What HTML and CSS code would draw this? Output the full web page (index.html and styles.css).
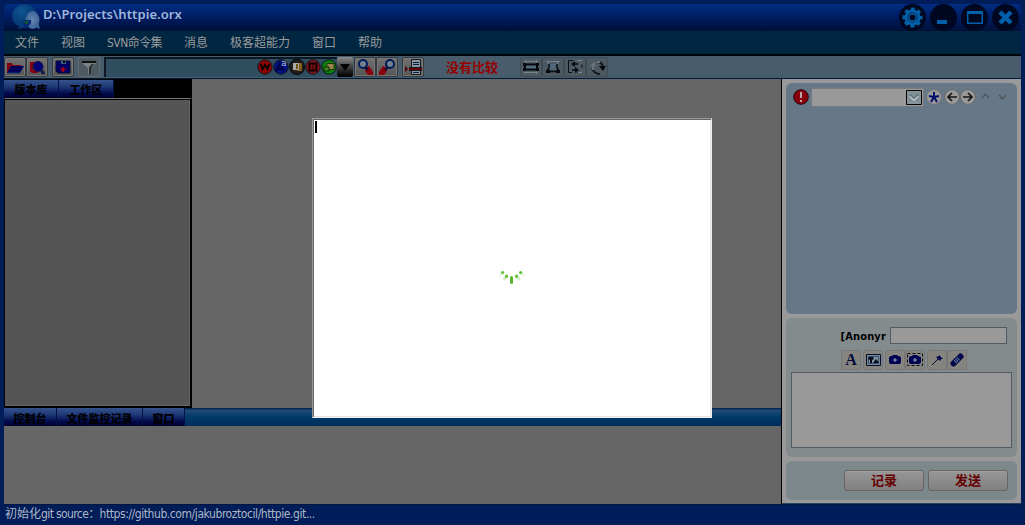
FILE: index.html
```html
<!DOCTYPE html>
<html lang="zh-CN">
<head>
<meta charset="utf-8">
<title>D:\Projects\httpie.orx</title>
<link rel="stylesheet" href="styles.css">
</head>
<body>
<div class="window">
  <header class="titlebar">
    <svg class="logo" width="30" height="27" viewBox="0 0 30 27"><defs><radialGradient id="lg" cx=".4" cy=".3"><stop offset="0" stop-color="#0d568f"/><stop offset="1" stop-color="#063a78"/></radialGradient><radialGradient id="lg2"><stop offset="0" stop-color="#6585ad"/><stop offset="1" stop-color="#3d6599"/></radialGradient></defs><ellipse cx="13.500" cy="12" rx="12.500" ry="11.800" fill="url(#lg)"/><path d="M9 21l-2 4 7-2z" fill="#063a78"/><ellipse cx="21.500" cy="16" rx="7" ry="9" fill="url(#lg2)"/><path d="M24 23l5 2-2-7z" fill="#3d6599"/><path d="M12 16h8v3l-3 4-4 1z" fill="#08267a"/><path d="M12 17h6l-2 4z" fill="#0e5a30"/></svg>
    <h1 class="title">D:\Projects\httpie.orx</h1>
    <div class="controls">
      <svg width="27" height="27" viewBox="0 0 27 27"><circle cx="13.500" cy="13.500" r="13.500" fill="#000720"/><g stroke="#0060a9" fill="none"><circle cx="13.500" cy="13.500" r="8.500" stroke-width="3" stroke-dasharray="3.800 2.876" stroke-dashoffset="1.900"/><circle cx="13.500" cy="13.500" r="6.500" stroke-width="3"/></g><circle cx="13.500" cy="13.500" r="3.700" fill="none" stroke="#0060a9" stroke-width="1.500"/></svg>
      <svg width="27" height="27" viewBox="0 0 27 27"><circle cx="13.500" cy="13.500" r="13.500" fill="#000720"/><path d="M7 16h10v4H7z" fill="#0060a9"/></svg>
      <svg width="27" height="27" viewBox="0 0 27 27"><circle cx="13.500" cy="13.500" r="13.500" fill="#000720"/><path d="M6 7h16v13H6zM7.500 10v8.500h13V10z" fill="#0060a9" fill-rule="evenodd"/></svg>
      <svg width="27" height="27" viewBox="0 0 27 27"><circle cx="13.500" cy="13.500" r="13.500" fill="#000720"/><path d="M8 8l11 11M19 8L8 19" stroke="#0060a9" stroke-width="4.500"/></svg>
    </div>
  </header>
  <nav class="menu"><span>文件</span><span>视图</span><span>SVN命令集</span><span>消息</span><span>极客超能力</span><span>窗口</span><span>帮助</span></nav>
  <div class="toolbar">
    <button class="tool"><svg width="18" height="18"><path d="M1 13V4h5l1 2h8v2H6z" fill="#7f0010"/><path d="M1 14L5 7h13l-4 7z" fill="#00005c"/><path d="M2 14h12" stroke="#173b70"/></svg></button>
    <button class="tool t2"><svg width="18" height="18"><path d="M2 3h9v3H5v5h5v3H4l-2-2z" fill="#850010"/><circle cx="10" cy="7.500" r="5" fill="#000078" stroke="#111b3b"/><path d="M13 11l3 4" stroke="#111b48" stroke-width="3"/></svg></button>
    <button class="tool t3"><svg width="18" height="18"><path d="M2 2h14v12H4l-2-2z" fill="#000067" stroke="#000c2c"/><path d="M7 2h5v3H7z" fill="#386080"/><path d="M9 2h2v2H9z" fill="#000"/><path d="M9 13V8M6.500 10.500h5" stroke="#9a0017" stroke-width="2"/></svg></button>
    <button class="tool t4 pale filter"><svg width="18" height="18"><path d="M2 2h14v2l-5 5v6H8V9L2 4z" fill="#7c8184"/><path d="M2 2h14v2H2z" fill="#111"/><path d="M12 5h2l-3 4v6H9V8z" fill="#272b2e"/></svg></button>
    <div class="address">
      <svg width="80" height="18" viewBox="0 0 80 18"><g stroke="#10151b"><circle cx="8" cy="9" r="7.200" fill="#8b0505"/><circle cx="24" cy="9" r="7.200" fill="#001386"/><circle cx="40" cy="9" r="7.200" fill="#241e17" stroke-width="2"/><circle cx="56" cy="9" r="7.200" fill="#80151b"/><circle cx="72" cy="9" r="7.200" fill="#07840a"/></g><path d="M3.500 6l2 5L8 7l2.500 4 2-5" fill="none" stroke="#100000" stroke-width="2"/><path d="M19 13l4-8 4 8M21 11h5" fill="none" stroke="#00003d" stroke-width="2"/><path d="M40 5h5v8h-5z" fill="#7d5b17"/><path d="M36 5h6v7h-6z" fill="#a9aaa7"/><path d="M39 6h2v5h-2z" fill="#6b5010"/><path d="M52.500 5.500h7v7h-7z" fill="#7d1116" stroke="#120000" stroke-width="2"/><path d="M56 6v6" stroke="#210000"/><path d="M70 5.500h7v6h-7z" fill="#9d8151" stroke="#28370b"/><path d="M67 9h5v4h-5z" fill="#43871e" stroke="#102a05"/></svg><span class="superscript">a</span>
    </div>
    <button class="drop"><svg width="16" height="18"><path d="M3 6h10l-5 7z" fill="#000"/></svg></button>
    <button class="tool"><svg width="18" height="18"><path d="M9 9l4-2 4 6v3h-5l-3-4z" fill="#8b000e"/><circle cx="7" cy="5" r="4" fill="#71818f" stroke="#001b59" stroke-width="2"/><path d="M9 8l3 3" stroke="#00123d" stroke-width="2"/></svg></button>
    <button class="tool t2"><svg width="18" height="18"><path d="M9 9L5 7 1 13v3h5l3-4z" fill="#8b000e"/><circle cx="12" cy="5" r="4" fill="#71818f" stroke="#001b59" stroke-width="2"/><path d="M10 8l-3 3" stroke="#00123d" stroke-width="2"/></svg></button>
    <button class="tool t3"><svg width="18" height="18"><path d="M7.500.5h9v15h-9z" fill="#8797a5" stroke="#15191d"/><path d="M9 3.500h6M9 5.500h6M9 13.500h6" stroke="#111d30"/><path d="M5 8h13v4H5z" fill="#15191d"/><path d="M5 9h13v2H5z" fill="#650008"/><path d="M1 7l3 3-3 3z" fill="#550005"/></svg></button>
    <strong class="compare">没有比较</strong>
    <div class="compare-tools">
      <button class="tool pale"><svg width="18" height="18"><path d="M3.500 1v14M14.500 1v14" stroke="#687784"/><path d="M2 2.500h14M2 13.500h14" stroke="#78828b"/><path d="M3 5.500h12v5H3z" fill="#526a7b" stroke="#03090f" stroke-width="2"/><path d="M1 5.500h3M14 5.500h3M1 10.500h3M14 10.500h3" stroke="#03090f" stroke-width="3"/></svg></button>
      <button class="tool pale"><svg width="18" height="18"><path d="M2 2.500h14M4.500 2v4M13.500 2v4" stroke="#738592"/><path d="M5 5.500h8M5 7.500h8M5 9.500h8" stroke="#52718b"/><path d="M5 5v4l-2 3M13 5v4l2 3M4 12.500h10" fill="none" stroke="#050a10" stroke-width="1.500"/><path d="M2 11h4v3H2zM12 11h4v3h-4z" fill="#050a10"/></svg></button>
      <button class="tool pale"><svg width="18" height="18"><path d="M7 1.500H2.500v12H6M11 1.500h5v12h-5" fill="none" stroke="#07101a"/><path d="M11 1.500h5v4M12 13.500h4V9" fill="none" stroke="#7a8791"/><path d="M6 5h6M6 11h6" stroke="#050a0e" stroke-width="1.500"/><path d="M9 2v6L5 5zM9 8v6l4-3z" fill="#050a0e"/></svg></button>
      <button class="tool pale"><svg width="18" height="18"><path d="M4 10q3 5 8 5" fill="none" stroke="#10191e" stroke-width="2"/><path d="M10 3q5 1 5 6" fill="none" stroke="#10191e" stroke-width="2"/><path d="M11 7h7l-3 5z" fill="#03070a"/><path d="M2 7h6L6 3z" fill="#6b737b"/><path d="M5 7v4M9 3h3" stroke="#6b737b" stroke-width="2"/></svg></button>
    </div>
  </div>
  <main class="content">
    <section class="workspace">
      <div class="upper">
        <aside class="browser"><div class="tabs top-tabs"><span>版本库</span><span>工作区</span></div><div class="tree"></div></aside>
      </div>
      <div class="tabs bottom-tabs"><span>控制台</span><span>文件监控记录</span><span>窗口</span></div>
      <div class="console"></div>
      <div class="dialog"><i class="caret"></i>
        <svg class="spinner" width="26" height="18" viewBox="0 0 26 18"><g stroke-linecap="round" stroke-width="3"><path d="M12.500 7.500v5" stroke="#55b92b"/><path d="M7.500 6l-2 3M18 6l2 3" stroke="#d5eccb"/><path d="M3 3.500L1.500 5M23 3.500L24 5" stroke="#eaf5e5"/><path d="M7.500 6v.5M17.500 6v.5" stroke="#65c33c"/><path d="M3.500 2.500h.3M21.500 2.500h.3" stroke="#65c33c"/></g></svg>
      </div>
    </section>
    <aside class="chat">
      <section class="card conversation">
        <svg width="16" height="16"><circle cx="8" cy="8" r="7.300" fill="#8a000d" stroke="#210007"/><path d="M8 3v6M8 11v2" stroke="#b7aaad" stroke-width="2"/></svg>
        <div class="select"><svg width="16" height="15"><path d="M.5.5h15v14H.5z" fill="#8b9499" stroke="#050505"/><path d="M2.500 2.500h11v10h-11z" fill="#7c8f98"/><path d="M4 6l4 4 4-4" fill="none" stroke="#b6c0c4" stroke-width="2"/><path d="M4 4.500l4 4 4-4" fill="none" stroke="#38454d"/></svg></div>
        <svg class="star" width="16" height="16"><circle cx="8" cy="8" r="7.400" fill="#999" stroke="#777"/><path d="M8 3v5M8 8L3 7M8 8l5-1M8 8l-3 5M8 8l3 5" stroke="#00106c" stroke-width="2"/></svg>
        <svg class="back" width="16" height="16"><circle cx="8" cy="8" r="7.400" fill="#999" stroke="#666"/><path d="M13 8H4m4-4L4 8l4 4" fill="none" stroke="#151515" stroke-width="1.700"/></svg>
        <svg width="16" height="16"><circle cx="8" cy="8" r="7.400" fill="#999" stroke="#666"/><path d="M3 8h9M8 4l4 4-4 4" fill="none" stroke="#151515" stroke-width="1.700"/></svg>
        <svg class="chevrons" width="26" height="16"><path d="M1 9l3.500-4L8 9M18 6l3.500 4L25 6" fill="none" stroke="#4c535a" stroke-width="1.200"/></svg>
      </section>
      <section class="card compose">
        <div class="identity"><b>[Anonyr</b><span class="input"></span></div>
        <div class="format">
          <button class="letter">A</button>
          <button class="f2"><svg width="18" height="18"><path d="M2.500 3.500h14v11h-14z" fill="#7e8790" stroke="#040b30"/><path d="M4.500 5.500h10v7h-10z" fill="#8294a2" stroke="#33506f"/><path d="M5 6h4l1 2-2 1v3H6V9L4 8zM9 12l3-4 3 4z" fill="#05091d"/></svg></button>
          <button class="f3"><svg width="18" height="18"><path d="M3 7q0-2 3-2l1-1h4l1 1q3 0 3 2v4q0 2-2 2H5q-2 0-2-2z" fill="#000052"/><path d="M9 7v4M7 9h4" stroke="#9baab9"/></svg></button>
          <button><svg width="18" height="18"><path d="M1.500 2.500h15v12h-15z" fill="none" stroke="#080810" stroke-dasharray="3 2"/><path d="M3 7q0-2 3-2l1-1h4l1 1q3 0 3 2v4q0 2-2 2H5q-2 0-2-2z" fill="#000052"/><path d="M9 7v4M7 9h4" stroke="#9baab9"/></svg></button>
          <button class="f3"><svg width="18" height="18"><path d="M4 14l7-7" stroke="#02073a"/><path d="M8 6l3-1V4l4 4h-2l-1 2z" fill="#000052"/></svg></button>
          <button><svg width="18" height="18"><path d="M5.500 12.500l7-7" stroke="#02074b" stroke-width="6" stroke-linecap="round"/><path d="M7 11l4-4" stroke="#6f87a0" stroke-width="4" stroke-dasharray="1 1"/></svg></button>
        </div>
        <div class="textarea"></div>
      </section>
      <section class="card actions"><button>记录</button><button>发送</button></section>
    </aside>
  </main>
  <footer class="status">初始化<span class="source">git source：</span><span class="url">https://github.com/jakubroztocil/httpie.git...</span></footer>
</div>
</body>
</html>
```
FILE: styles.css
```css
* { box-sizing: border-box; }
body { margin: 0; overflow: hidden; font-family: "DejaVu Sans Condensed", "Noto Sans CJK SC", sans-serif; font-size: 12px; }
svg { display: block; flex: none; }
button { margin: 0; padding: 0; font: inherit; }
.window { width: 1025px; height: 525px; padding: 4px 4px 0; background: #001c59; display: flex; flex-direction: column; }
.titlebar { height: 27px; display: flex; background: linear-gradient(#002e83, #001b61 50%, #001038); border-radius: 4px 4px 0 0; flex: none; }
.logo { margin-left: 7px; }
.title { margin: 0 0 0 2px; color: #9fb6dc; font: 600 13px/21px "Noto Sans", sans-serif; letter-spacing: .08px; white-space: nowrap; }
.controls { margin-left: auto; margin-right: 2px; display: flex; gap: 4px; }
.menu { height: 25px; flex: none; display: flex; gap: 22px; padding-left: 11px; background: #002641; border-bottom: 2px solid #000308; color: #9a9a9a; line-height: 25px; white-space: nowrap; }
.menu span:nth-child(3) { letter-spacing: -.55px; }
.toolbar { height: 23px; flex: none; display: flex; background: #485c6b; border-bottom: 1px solid #001c3b; padding-top: 1px; }
.tool { width: 22px; height: 20px; flex: none; border: 1px solid #353a3f; border-radius: 2px; background: linear-gradient(#737373, #555); padding: 1px; box-shadow: inset 0 0 0 1px #777; }
.pale { background: #4d5961; border-color: #3e4c57; box-shadow: none; }
.filter { border-color: #606a70; }
.t3, .t4 { margin-left: 4px; }
.address { margin-left: 4px; width: 233px; height: 20px; background: #304e60; border-top: 2px solid #0b1822; border-left: 2px solid #0b1822; display: flex; justify-content: flex-end; position: relative; }
.address svg { margin-top: -1px; }
.superscript { position: absolute; left: 175px; top: -1px; font: 9px/10px "DejaVu Sans", sans-serif; color: #b6bed0; }
.drop { width: 16px; height: 20px; border: 0; border-radius: 2px; background: linear-gradient(#8a8a8a, #222 70%, #000); margin-right: 1px; }
.compare { width: 52px; margin-left: 22px; color: #950000; font-size: 13px; line-height: 21px; white-space: nowrap; }
.compare-tools { margin-left: 22px; display: flex; }
.content { height: 425px; flex: none; display: flex; }
.workspace { width: 778px; position: relative; display: flex; flex-direction: column; border-right: 1px solid #000; }
.upper { height: 329px; background: #666; }
.browser { width: 188px; height: 329px; background: #000; padding-top: 1px; }
.tabs { height: 18px; display: flex; color: #000; font-size: 11px; font-weight: 900; line-height: 22px; overflow: hidden; white-space: nowrap; }
.tabs span { background: linear-gradient(#35528a, #203a78 35%, #000a4d 75%, #000029); border-right: 1px solid #001343; text-align: center; overflow: hidden; }
.top-tabs span { width: 55px; }
.tree { height: 310px; background: #555; border: 1px solid #000; border-top: 1px solid #777; border-right-width: 2px; border-bottom-width: 2px; box-shadow: inset 0 1px #000, inset -1px 0 #666, inset 0 -1px #666; }
.bottom-tabs { line-height: 24px; background: linear-gradient(#002753 0 1px, #244b75 2px, #003a68 50%, #002c5a); }
.bottom-tabs span:nth-child(1) { width: 53px; }
.bottom-tabs span:nth-child(2) { width: 86px; }
.bottom-tabs span:nth-child(3) { width: 42px; }
.console { height: 78px; background: #666; }
.dialog { position: absolute; left: 308px; top: 39px; width: 400px; height: 300px; background: #fff; border: 1px solid; border-color: #999 #eee #eee #999; box-shadow: inset 1px 1px #666, inset -1px -1px #e5e5e5; padding: 2px; }
.caret { display: block; width: 2px; height: 12px; background: #000; }
.spinner { margin: 137px 0 0 184px; }
.chat { width: 239px; background: #999; padding: 4px; display: flex; flex-direction: column; gap: 4px; box-shadow: inset 0 -1px #28445c; }
.card { width: 231px; border-radius: 6px; }
.conversation { height: 231px; background: #667888; display: flex; align-items: flex-start; padding: 6px 7px; }
.select { width: 113px; height: 19px; background: #999; border: 1px solid #757b80; margin: -1px 0 0 2px; padding: 1px; display: flex; justify-content: flex-end; }
.star { margin-left: 2px; }
.back { margin-left: 2px; }
.chevrons { margin-left: 5px; }
.compose { height: 139px; background: #838b8d; padding: 9px 5px; }
.identity { height: 17px; display: flex; justify-content: flex-end; padding-right: 5px; }
.identity b { font-size: 11px; line-height: 19px; margin-right: 4px; letter-spacing: .15px; }
.input { width: 117px; background: #999; border: 1px solid #515b66; }
.format { margin: 6px 0 2px 50px; height: 20px; display: flex; }
.format button { width: 20px; height: 20px; border: 1px solid #777; border-radius: 2px; background: #86847f; display: flex; justify-content: center; }
.format .letter { color: #05083a; font: bold 16px/18px "Liberation Serif", serif; }
.format .f2, .format .f3 { margin-left: 2px; }
.textarea { height: 76px; background: #999; border: 1px solid #515b66; }
.actions { height: 39px; background: #7c888c; display: flex; gap: 4px; padding: 9px 9px 9px 58px; }
.actions button { width: 80px; height: 21px; border: 1px solid #6b6562; border-radius: 3px; background: linear-gradient(#979797, #808080); color: #600; font-size: 13px; line-height: 19px; font-weight: bold; box-shadow: inset 0 1px #a0a0a0; }
.status { height: 17px; color: #afb7c4; line-height: 21px; white-space: nowrap; border-top: 1px solid #001642; padding-left: 1px; }
.status { line-height: 19px; }
.source { letter-spacing: -.62px; }
.url { letter-spacing: -.43px; }
```
